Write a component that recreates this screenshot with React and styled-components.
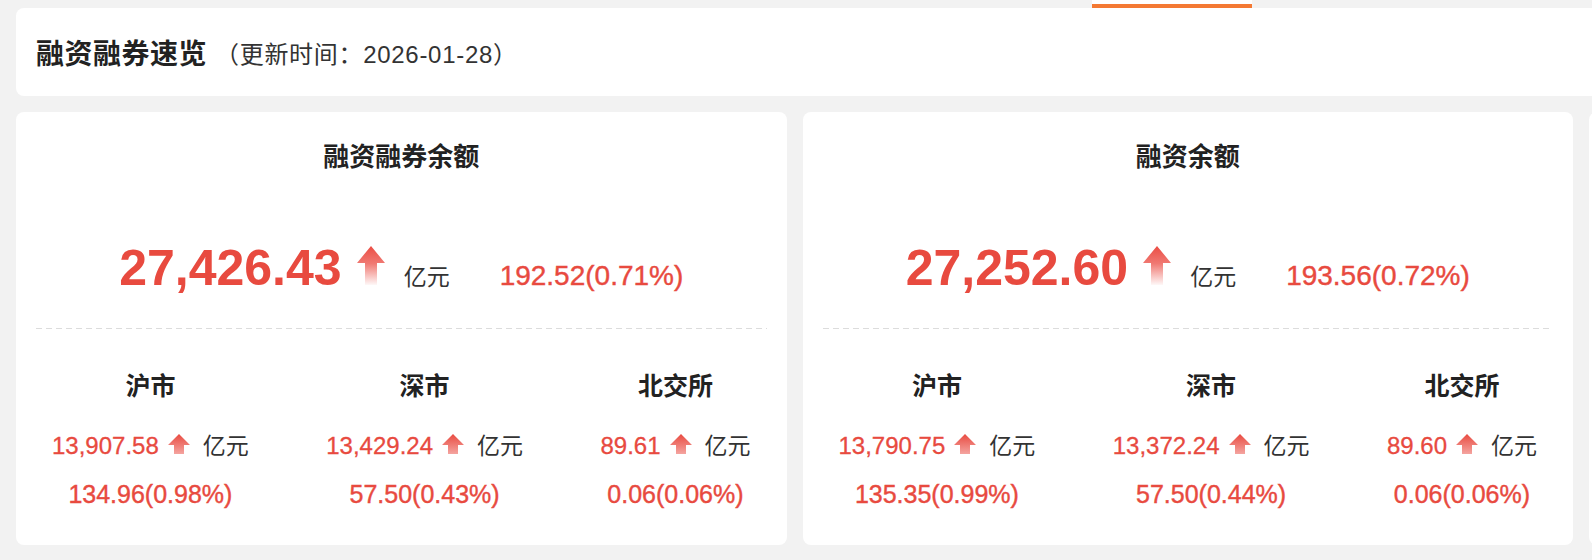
import React from "react";
import styled, { createGlobalStyle } from "styled-components";

const RED = "#e84a3f";
const GREEN = "#1f9e5a";
const CJK = `"Noto Sans CJK SC", "Noto Sans", sans-serif`;
const NUM = `"Liberation Sans", Arial, "Noto Sans CJK SC", sans-serif`;

const GlobalStyle = createGlobalStyle`
  html, body {
    margin: 0;
    padding: 0;
    background: #f2f2f2;
    overflow: hidden;
  }
  body {
    font-family: ${CJK};
    color: #222;
  }
`;

const Page = styled.div`
  width: 2375px;
  box-sizing: border-box;
  padding: 0 16px 15px;
  display: flex;
  flex-direction: column;
`;

const TabBar = styled.nav`
  display: flex;
  height: 8px;
  padding-left: 116px;
`;

const Tab = styled.div`
  width: 160px;
  box-sizing: border-box;
  background: ${(p) => (p.$active ? "#fff" : "transparent")};
  border-bottom: 4px solid ${(p) => (p.$active ? "#f47933" : "transparent")};
`;

const HeaderCard = styled.header`
  height: 88px;
  box-sizing: border-box;
  background: #fff;
  border-radius: 8px;
  padding: 0 20px;
  display: flex;
  align-items: center;
`;

const HeaderTitle = styled.h1`
  margin: 0;
  font-family: ${CJK};
  font-size: 28px;
  font-weight: 700;
  color: #222;
  letter-spacing: 0.5px;
`;

const UpdateTime = styled.span`
  margin-left: 8px;
  font-family: ${NUM};
  font-size: 24px;
  letter-spacing: 0.7px;
  color: #333;
`;

const CardGrid = styled.div`
  margin-top: 16px;
  display: grid;
  grid-template-columns: repeat(3, 770.5px);
  gap: 16px;
`;

const StatCard = styled.section`
  background: #fff;
  border-radius: 8px;
  padding: 0 20px 33px;
  display: flex;
  flex-direction: column;
`;

const CardTitle = styled.h2`
  margin: 25px 0 0;
  line-height: 36px;
  text-align: center;
  font-family: ${CJK};
  font-size: 26px;
  font-weight: 700;
  color: #222;
`;

const BigRow = styled.div`
  margin-top: 65px;
  height: 60px;
  display: flex;
  justify-content: center;
  align-items: baseline;
`;

const BigValue = styled.span`
  font-family: ${NUM};
  font-size: 50px;
  font-weight: 700;
  line-height: 60px;
  color: ${(p) => p.$color};
`;

const BigUnit = styled.span`
  font-family: ${CJK};
  font-size: 23px;
  color: #333;
  margin-right: 50px;
`;

const BigChange = styled.span`
  font-family: ${NUM};
  font-size: 28px;
  color: ${(p) => p.$color};
  -webkit-text-stroke: 0.4px ${(p) => p.$color};
`;

const Divider = styled.hr`
  margin: 30px 0 0;
  border: 0;
  height: 1px;
  background-image: linear-gradient(to right, #dcdcdc 0 6px, transparent 6px 10px);
  background-size: 10px 1px;
  background-repeat: repeat-x;
`;

const Markets = styled.div`
  display: flex;
  justify-content: space-between;
  padding: 0 16px;
`;

const Market = styled.div`
  display: flex;
  flex-direction: column;
  align-items: center;
`;

const MarketName = styled.h3`
  margin: 37px 0 0;
  line-height: 36px;
  font-family: ${CJK};
  font-size: 25px;
  font-weight: 700;
  color: #222;
`;

const ValueRow = styled.div`
  margin-top: 25px;
  height: 36px;
  display: flex;
  align-items: baseline;
`;

const SmallValue = styled.span`
  font-family: ${NUM};
  font-size: 24px;
  line-height: 36px;
  color: ${(p) => p.$color};
  -webkit-text-stroke: 0.3px ${(p) => p.$color};
`;

const SmallUnit = styled.span`
  font-family: ${CJK};
  font-size: 23px;
  color: #333;
`;

const ChangeRow = styled.div`
  margin-top: 13px;
  line-height: 36px;
  font-family: ${NUM};
  font-size: 25px;
  color: ${(p) => p.$color};
  -webkit-text-stroke: 0.4px ${(p) => p.$color};
`;

const ArrowSvg = styled.svg`
  display: inline-block;
  flex: none;
  margin: ${(p) => p.$margin};
  transform: ${(p) => (p.$up ? "none" : "rotate(180deg)")};
`;

let gid = 0;
function BigArrow({ up }) {
  const id = React.useMemo(() => `ba${gid++}`, []);
  const c = up ? "#eb4d44" : GREEN;
  return (
    <ArrowSvg width="28" height="39" viewBox="0 0 28 39" $margin="0 19px 0 15px" $up={up}>
      <defs>
        <linearGradient id={id} x1="0" y1="0" x2="0" y2="1">
          <stop offset="0" stopColor={c} />
          <stop offset="0.45" stopColor={c} stopOpacity="0.75" />
          <stop offset="1" stopColor={c} stopOpacity="0.04" />
        </linearGradient>
      </defs>
      <path d="M14 0 L28 17 L20 17 L20 39 L8 39 L8 17 L0 17 Z" fill={`url(#${id})`} />
    </ArrowSvg>
  );
}

function SmallArrow({ up }) {
  const id = React.useMemo(() => `sa${gid++}`, []);
  const c = up ? "#e94a40" : GREEN;
  return (
    <ArrowSvg width="22" height="20" viewBox="0 0 22 20" $margin="0 13px 0 9px" $up={up}>
      <defs>
        <linearGradient id={id} x1="0" y1="0" x2="0" y2="1">
          <stop offset="0" stopColor={c} />
          <stop offset="1" stopColor={c} stopOpacity="0.5" />
        </linearGradient>
      </defs>
      <path d="M11 0 L22 11 L16 11 L16 20 L6 20 L6 11 L0 11 Z" fill={`url(#${id})`} />
    </ArrowSvg>
  );
}

const cards = [
  {
    title: "融资融券余额",
    value: "27,426.43",
    change: "192.52(0.71%)",
    up: true,
    markets: [
      { name: "沪市", value: "13,907.58", change: "134.96(0.98%)", up: true },
      { name: "深市", value: "13,429.24", change: "57.50(0.43%)", up: true },
      { name: "北交所", value: "89.61", change: "0.06(0.06%)", up: true },
    ],
  },
  {
    title: "融资余额",
    value: "27,252.60",
    change: "193.56(0.72%)",
    up: true,
    markets: [
      { name: "沪市", value: "13,790.75", change: "135.35(0.99%)", up: true },
      { name: "深市", value: "13,372.24", change: "57.50(0.44%)", up: true },
      { name: "北交所", value: "89.60", change: "0.06(0.06%)", up: true },
    ],
  },
  {
    title: "融券余额",
    value: "173.83",
    change: "-1.04(-0.59%)",
    up: false,
    markets: [
      { name: "沪市", value: "116.83", change: "-0.39(-0.33%)", up: false },
      { name: "深市", value: "57.00", change: "0.00(0.00%)", up: false },
      { name: "北交所", value: "0.01", change: "0.00(0.00%)", up: false },
    ],
  },
];

const tabs = ["市场总览", "资金流向", "龙虎榜", "大宗交易", "股东增减持", "限售解禁", "融资融券"];

export default function App() {
  return (
    <>
      <GlobalStyle />
      <Page>
        <TabBar>
          {tabs.map((t, i) => (
            <Tab key={t} aria-label={t} $active={i === tabs.length - 1} />
          ))}
        </TabBar>
        <HeaderCard>
          <HeaderTitle>融资融券速览</HeaderTitle>
          <UpdateTime>（更新时间：2026-01-28）</UpdateTime>
        </HeaderCard>
        <CardGrid>
          {cards.map((c) => {
            const col = c.up ? RED : GREEN;
            return (
              <StatCard key={c.title}>
                <CardTitle>{c.title}</CardTitle>
                <BigRow>
                  <BigValue $color={col}>{c.value}</BigValue>
                  <BigArrow up={c.up} />
                  <BigUnit>亿元</BigUnit>
                  <BigChange $color={col}>{c.change}</BigChange>
                </BigRow>
                <Divider />
                <Markets>
                  {c.markets.map((m) => {
                    const mc = m.up ? RED : GREEN;
                    return (
                      <Market key={m.name}>
                        <MarketName>{m.name}</MarketName>
                        <ValueRow>
                          <SmallValue $color={mc}>{m.value}</SmallValue>
                          <SmallArrow up={m.up} />
                          <SmallUnit>亿元</SmallUnit>
                        </ValueRow>
                        <ChangeRow $color={mc}>{m.change}</ChangeRow>
                      </Market>
                    );
                  })}
                </Markets>
              </StatCard>
            );
          })}
        </CardGrid>
      </Page>
    </>
  );
}
